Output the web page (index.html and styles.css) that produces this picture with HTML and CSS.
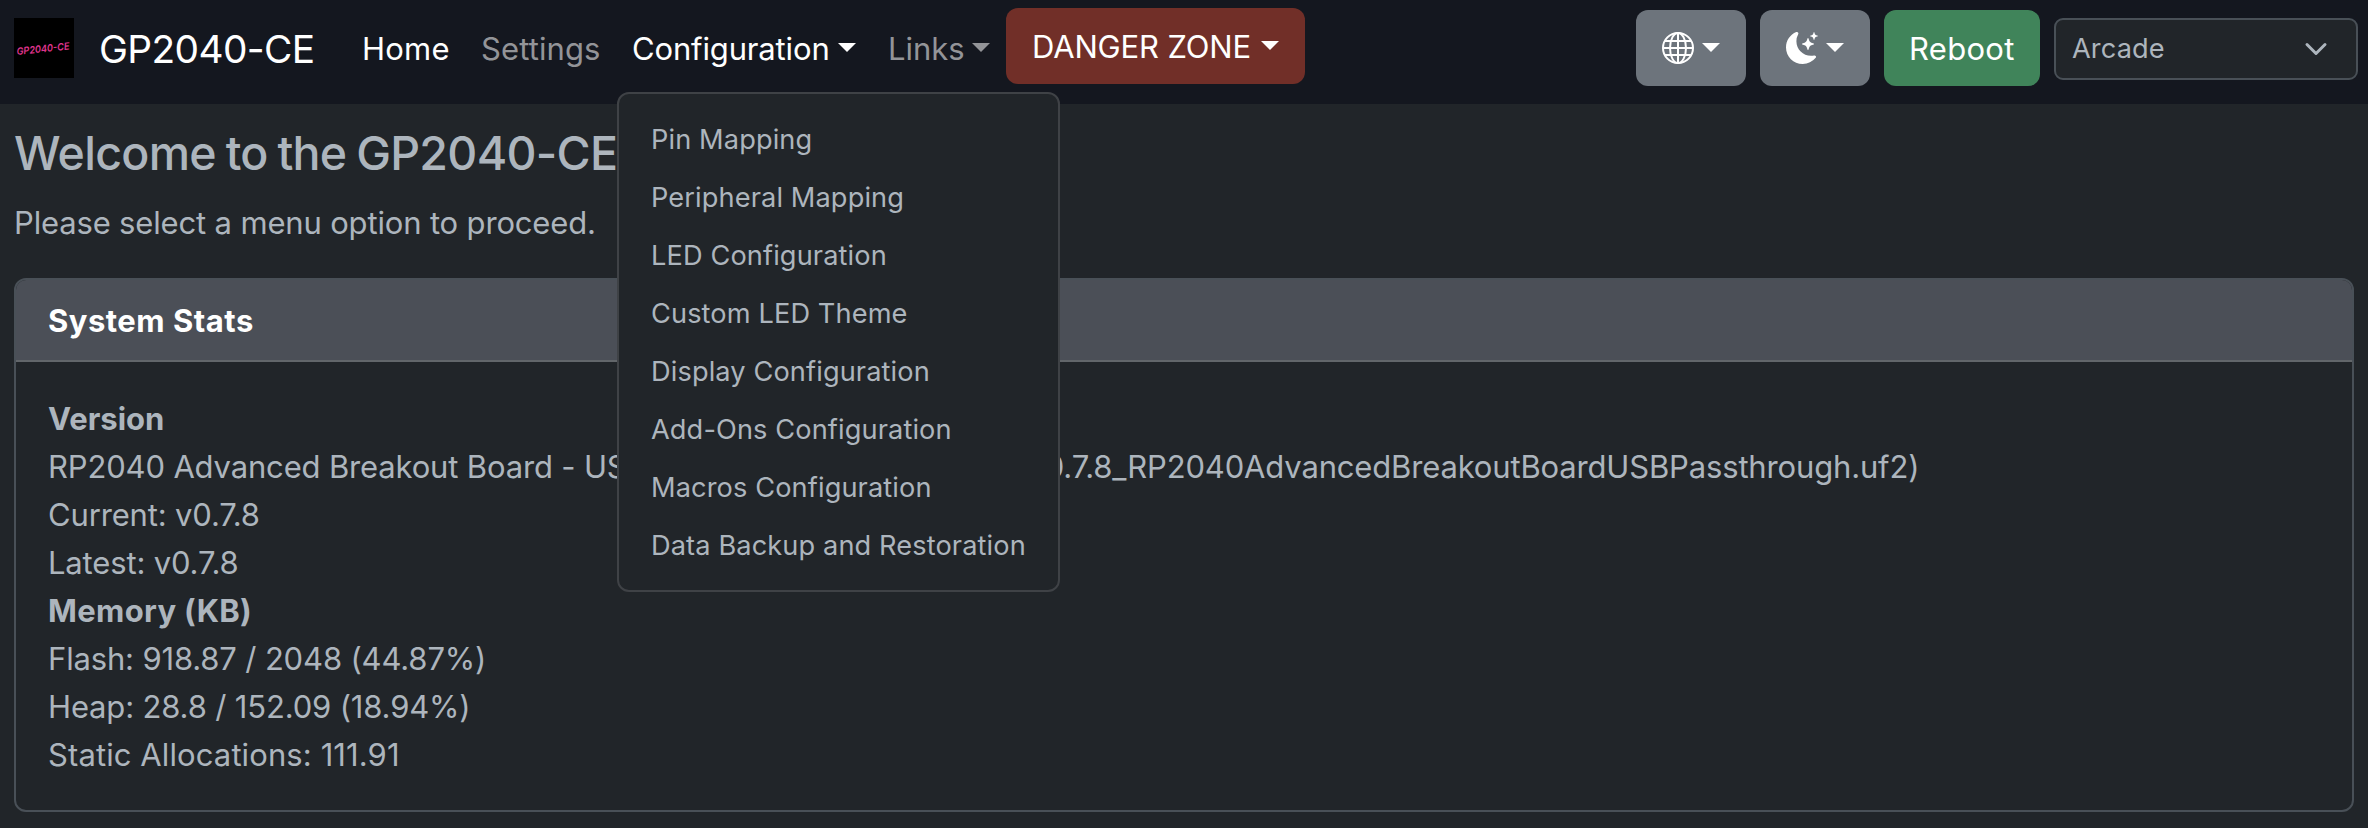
FILE: index.html
```html
<!DOCTYPE html>
<html lang="en">
<head>
<meta charset="utf-8">
<title>GP2040-CE Configurator</title>
<link rel="stylesheet" href="styles.css">
</head>
<body>
<nav class="navbar">
  <a class="brand">
    <svg class="logo" viewBox="0 0 60 60"><rect width="60" height="60" fill="#000"/><text class="logo-text" x="3" y="37" textLength="53" lengthAdjust="spacingAndGlyphs" transform="rotate(-6 3 37)">GP2040-CE</text></svg>
    <span class="brand-name">GP2040-CE</span>
  </a>
  <div class="nav-links">
    <a class="nav-link nav-home active">Home</a>
    <a class="nav-link nav-settings">Settings</a>
    <div class="dropdown">
      <a class="nav-link nav-config active caret">Configuration</a>
      <div class="menu">
        <a class="menu-item">Pin Mapping</a>
        <a class="menu-item">Peripheral Mapping</a>
        <a class="menu-item">LED Configuration</a>
        <a class="menu-item">Custom LED Theme</a>
        <a class="menu-item">Display Configuration</a>
        <a class="menu-item">Add-Ons Configuration</a>
        <a class="menu-item">Macros Configuration</a>
        <a class="menu-item">Data Backup and Restoration</a>
      </div>
    </div>
    <a class="nav-link nav-more caret">Links</a>
    <a class="btn danger caret">DANGER ZONE</a>
  </div>
  <div class="tools">
    <a class="btn secondary caret"><svg class="icon" viewBox="0 0 16 16" fill="none" stroke="currentColor"><circle cx="8" cy="8" r="7.5"/><ellipse cx="8" cy="8" rx="4" ry="7.5"/><path d="M8 .5v15M.5 8h15M1.5 4.5h13M1.5 11.5h13"/></svg></a>
    <a class="btn secondary caret"><svg class="icon" viewBox="0 0 16 16" fill="currentColor"><path d="M6 .278a.77.77 0 0 1 .08.858 7.2 7.2 0 0 0-.878 3.46c0 4.021 3.278 7.277 7.318 7.277q.792-.001 1.533-.16a.79.79 0 0 1 .81.316.73.73 0 0 1-.031.893A8.35 8.35 0 0 1 8.344 16C3.734 16 0 12.286 0 7.71 0 4.266 2.114 1.312 5.124.06A.75.75 0 0 1 6 .278"/><path d="M10.794 3.148a.217.217 0 0 1 .412 0l.387 1.162c.173.518.579.924 1.097 1.097l1.162.387a.217.217 0 0 1 0 .412l-1.162.387a1.73 1.73 0 0 0-1.097 1.097l-.387 1.162a.217.217 0 0 1-.412 0l-.387-1.162A1.73 1.73 0 0 0 9.31 6.593l-1.162-.387a.217.217 0 0 1 0-.412l1.162-.387a1.73 1.73 0 0 0 1.097-1.097zM13.863.099a.145.145 0 0 1 .274 0l.258.774c.115.346.386.617.732.732l.774.258a.145.145 0 0 1 0 .274l-.774.258a1.16 1.16 0 0 0-.732.732l-.258.774a.145.145 0 0 1-.274 0l-.258-.774a1.16 1.16 0 0 0-.732-.732l-.774-.258a.145.145 0 0 1 0-.274l.774-.258c.346-.115.617-.386.732-.732z"/></svg></a>
    <a class="btn success">Reboot</a>
    <div class="select"><span>Arcade</span><svg class="chevron" viewBox="0 0 16 16" fill="none" stroke="currentColor" stroke-width="2" stroke-linecap="round" stroke-linejoin="round"><path d="m2 5 6 6 6-6"/></svg></div>
  </div>
</nav>
<main class="page">
  <h1 class="title">Welcome to the GP2040-CE Web Configurator!</h1>
  <p class="lead">Please select a menu option to proceed.</p>
  <section class="card">
    <div class="card-header">System Stats</div>
    <div class="card-body">
      <div class="strong">Version</div>
      <div>RP2040 Advanced Breakout Board - USB Passthrough (GP2040-CE_0.7.8_RP2040AdvancedBreakoutBoardUSBPassthrough.uf2)</div>
      <div>Current: v0.7.8</div>
      <div>Latest: v0.7.8</div>
      <div class="strong memory">Memory (KB)</div>
      <div>Flash: 918.87 / 2048 (44.87%)</div>
      <div>Heap: 28.8 / 152.09 (18.94%)</div>
      <div class="static">Static Allocations: 111.91</div>
    </div>
  </section>
</main>
</body>
</html>
```
FILE: styles.css
```css
* { box-sizing: border-box; }
body {
  margin: 0;
  background: #212529;
  color: #adb5bd;
  font: 31px/48px Inter, "Liberation Sans", sans-serif;
}
.navbar {
  display: flex;
  align-items: flex-start;
  height: 104px;
  padding: 8px 10px 0 14px;
  background: #14171f;
}
.brand { display: flex; align-items: center; width: 332px; height: 80px; gap: 25px; color: #fff; font-size: 38.8px; letter-spacing: -0.6px; }
.brand-name { padding-top: 1px; }
.logo { width: 60px; height: 60px; }
.logo-text { font: italic 600 10px Inter, sans-serif; letter-spacing: 0; fill: #e0358f; }
.nav-links { display: flex; }
.nav-link { display: flex; padding: 17px 16px 15px; color: #939498; white-space: nowrap; }
.nav-home { width: 119px; letter-spacing: 0.2px; }
.nav-settings { width: 151px; letter-spacing: 0.1px; }
.nav-config { width: 256px; letter-spacing: -0.15px; }
.nav-more { width: 134px; }
.active { color: #fff; }
.caret { justify-content: space-between; }
.caret::after {
  content: "";
  margin-top: 18px;
  height: 0;
  border-top: 9.6px solid;
  border-left: 9.6px solid transparent;
  border-right: 9.6px solid transparent;
}
.dropdown { position: relative; }
.menu {
  position: absolute;
  top: 84px;
  left: 1px;
  width: 443px;
  height: 500px;
  padding: 17px 0 15px;
  border: 2px solid #3f4246;
  border-radius: 12px;
  background: #212529;
  font-size: 27.2px;
  line-height: 42px;
  letter-spacing: 0.11px;
}
.menu-item { display: block; padding: 8px 32px; white-space: nowrap; }
.btn { display: flex; height: 76px; padding: 15px 26px 13px; border-radius: 12px; color: #fff; white-space: nowrap; }
.danger { width: 299px; padding-left: 26px; letter-spacing: -0.15px; background: #712f28; }
.secondary { width: 110px; padding-right: 26px; background: #6d747c; }
.success { width: 156px; padding-left: 25px; letter-spacing: 0.3px; background: #40845a; }
.tools { display: flex; align-items: center; gap: 14px; margin-left: auto; height: 80px; }
.icon { width: 32px; height: 32px; flex: none; margin-top: 7px; }
.btn.caret::after { margin-top: 17.5px; }
.select {
  display: flex;
  align-items: center;
  justify-content: space-between;
  width: 304px;
  height: 62px;
  margin-top: 2px;
  padding: 0 28px 0 16px;
  border: 2px solid #495057;
  border-radius: 9px;
  background: #212529;
  font-size: 27.2px;
  letter-spacing: 0.1px;
}
.chevron { width: 24px; height: 24px; }
.page { padding: 21px 14px 0; letter-spacing: -0.16px; }
.title { margin: 0 0 16px; font-size: 46.5px; font-weight: 500; line-height: 57.6px; letter-spacing: -0.7px; word-spacing: -2px; }
.lead { margin: 0 0 31px; }
.card { border: 2px solid #495057; border-radius: 12px; overflow: hidden; }
.card-header { padding: 17px 32px 15px; border-bottom: 2px solid #62666a; background: #4b4f57; color: #fff; font-weight: 700; letter-spacing: 0.5px; }
.card-body { padding: 33px 32px 31px; }
.strong { font-weight: 700; letter-spacing: 0; }
.memory { letter-spacing: 0.33px; }
.static { letter-spacing: 0.1px; }
```
